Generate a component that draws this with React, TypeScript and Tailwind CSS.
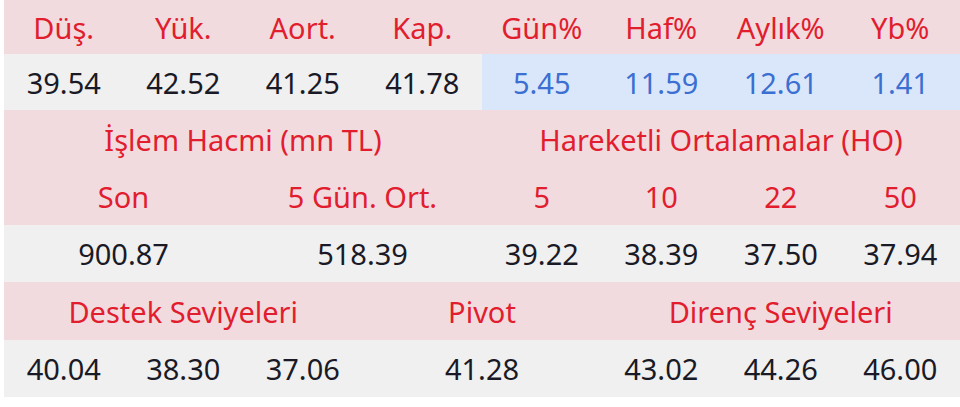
import React from 'react';

type Cell = { text: string; span?: number; tone?: 'blue' };

const head = 'bg-[#f2dbdf] text-[#e11d2e]';
const body = 'bg-[#f0f0f0] text-[#1a1a26]';

const rows: { cls: string; h: string; cells: Cell[] }[] = [
  {
    cls: head,
    h: 'h-[54px]',
    cells: ['Düş.', 'Yük.', 'Aort.', 'Kap.', 'Gün%', 'Haf%', 'Aylık%', 'Yb%'].map((t) => ({ text: t })),
  },
  {
    cls: body,
    h: 'h-[56px]',
    cells: [
      { text: '39.54' },
      { text: '42.52' },
      { text: '41.25' },
      { text: '41.78' },
      { text: '5.45', tone: 'blue' },
      { text: '11.59', tone: 'blue' },
      { text: '12.61', tone: 'blue' },
      { text: '1.41', tone: 'blue' },
    ],
  },
  {
    cls: head,
    h: 'h-[58px]',
    cells: [
      { text: 'İşlem Hacmi (mn TL)', span: 4 },
      { text: 'Hareketli Ortalamalar (HO)', span: 4 },
    ],
  },
  {
    cls: head,
    h: 'h-[57px]',
    cells: [
      { text: 'Son', span: 2 },
      { text: '5 Gün. Ort.', span: 2 },
      { text: '5' },
      { text: '10' },
      { text: '22' },
      { text: '50' },
    ],
  },
  {
    cls: body,
    h: 'h-[57px]',
    cells: [
      { text: '900.87', span: 2 },
      { text: '518.39', span: 2 },
      { text: '39.22' },
      { text: '38.39' },
      { text: '37.50' },
      { text: '37.94' },
    ],
  },
  {
    cls: head,
    h: 'h-[58px]',
    cells: [
      { text: 'Destek Seviyeleri', span: 3 },
      { text: 'Pivot', span: 2 },
      { text: 'Direnç Seviyeleri', span: 3 },
    ],
  },
  {
    cls: body,
    h: 'h-[57px]',
    cells: [
      { text: '40.04' },
      { text: '38.30' },
      { text: '37.06' },
      { text: '41.28', span: 2 },
      { text: '43.02' },
      { text: '44.26' },
      { text: '46.00' },
    ],
  },
];

const spanCls: Record<number, string> = {
  1: 'col-span-1',
  2: 'col-span-2',
  3: 'col-span-3',
  4: 'col-span-4',
};

export default function App() {
  return (
    <div className="w-[960px] h-[407px] bg-white pl-[4px] font-['Noto_Sans',sans-serif] text-[29px] leading-none">
      {rows.map((row, i) => (
        <div key={i} className={`grid grid-cols-8 ${row.h} ${row.cls}`}>
          {row.cells.map((c, j) => (
            <div
              key={j}
              className={`flex items-center justify-center ${spanCls[c.span ?? 1]} ${
                c.tone === 'blue' ? 'bg-[#dae7fb] text-[#3b6fd1]' : ''
              }`}
            >
              {c.text}
            </div>
          ))}
        </div>
      ))}
    </div>
  );
}
